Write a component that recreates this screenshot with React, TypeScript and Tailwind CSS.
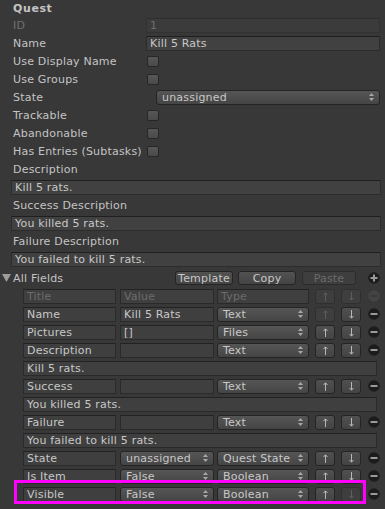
import React from "react";

const font = { fontFamily: '"DejaVu Sans", Verdana, sans-serif' };

function Field({ children, dim }: { children?: React.ReactNode; dim?: boolean }) {
  return (
    <div
      className={
        "h-[15px] flex items-center px-[3px] border border-[#2c2c2c] border-t-[#1f1f1f] leading-none truncate " +
        (dim ? "bg-[#3b3b3b] text-[#6f6f6f] border-[#323232] border-t-[#2e2e2e]" : "bg-[#414141] text-[#c8c8c8]")
      }
    >
      {children}
    </div>
  );
}

function Check() {
  return <div className="w-[12px] h-[11px] rounded-[2px] border border-[#262626] bg-gradient-to-b from-[#575757] to-[#4a4a4a]" />;
}

function Arrows() {
  return (
    <svg width="5" height="8" viewBox="0 0 5 8" className="shrink-0">
      <path d="M2.5 0 L5 3 L0 3 Z" fill="#a8a8a8" />
      <path d="M2.5 8 L5 5 L0 5 Z" fill="#a8a8a8" />
    </svg>
  );
}

function Drop({ children, className = "" }: { children: React.ReactNode; className?: string }) {
  return (
    <div
      className={
        "h-[15px] flex items-center justify-between pl-[5px] pr-[5px] rounded-[3px] border border-[#242424] bg-gradient-to-b from-[#565656] to-[#454545] text-[#c8c8c8] leading-none " +
        className
      }
    >
      <span>{children}</span>
      <Arrows />
    </div>
  );
}

function Label({ children, dim }: { children: React.ReactNode; dim?: boolean }) {
  return (
    <div className={"w-[146px] shrink-0 pl-[13px] leading-none whitespace-nowrap " + (dim ? "text-[#707070]" : "text-[#c4c4c4]")}>
      {children}
    </div>
  );
}

function Row({ children }: { children: React.ReactNode }) {
  return <div className="h-[18px] flex items-center">{children}</div>;
}

function Btn({ children, disabled, className = "" }: { children: React.ReactNode; disabled?: boolean; className?: string }) {
  return (
    <div
      className={
        "h-[14px] shrink-0 flex items-center justify-center rounded-[3px] border leading-none " +
        (disabled
          ? "border-[#2c2c2c] bg-[#3e3e3e] text-[#6a6a6a]"
          : "border-[#242424] bg-gradient-to-b from-[#525252] to-[#444444] text-[#c8c8c8]") +
        " " +
        className
      }
    >
      {children}
    </div>
  );
}

function ArrowBtn({ up, disabled }: { up?: boolean; disabled?: boolean }) {
  const c = disabled ? "#5e5e5e" : "#b8b8b8";
  return (
    <div
      className={
        "w-[20px] h-[15px] flex items-center justify-center rounded-[3px] border " +
        (disabled ? "border-[#2f2f2f] bg-[#3e3e3e]" : "border-[#242424] bg-gradient-to-b from-[#505050] to-[#444444]")
      }
    >
      <svg width="5" height="9" viewBox="0 0 5 9">
        {up ? (
          <>
            <path d="M2.5 1 L2.5 9" stroke={c} strokeWidth="1" />
            <path d="M0.5 3 L2.5 0.8 L4.5 3" stroke={c} strokeWidth="1" fill="none" />
          </>
        ) : (
          <>
            <path d="M2.5 0 L2.5 8" stroke={c} strokeWidth="1" />
            <path d="M0.5 6 L2.5 8.2 L4.5 6" stroke={c} strokeWidth="1" fill="none" />
          </>
        )}
      </svg>
    </div>
  );
}

function Circle({ plus, disabled }: { plus?: boolean; disabled?: boolean }) {
  const bg = disabled ? "#444444" : "#1c1c1c";
  const fg = disabled ? "#3a3a3a" : "#9a9a9a";
  return (
    <svg width="12" height="12" viewBox="0 0 12 12" className="shrink-0">
      <circle cx="6" cy="6" r="5.8" fill={bg} />
      <rect x="2.5" y="5" width="7" height="2" fill={fg} />
      {plus && <rect x="5" y="2.5" width="2" height="7" fill={fg} />}
    </svg>
  );
}

function Cell({ children, dim }: { children?: React.ReactNode; dim?: boolean }) {
  return (
    <div
      className={
        "h-[15px] flex items-center px-[3px] border border-[#2a2a2a] border-t-[#222222] bg-[#3f3f3f] leading-none whitespace-nowrap overflow-hidden " +
        (dim ? "text-[#6c6c6c]" : "text-[#c8c8c8]")
      }
    >
      {children}
    </div>
  );
}

type TRow = {
  title: string;
  value?: string;
  valueDrop?: string;
  type: string;
  upDis?: boolean;
  downDis?: boolean;
};

function TableRow({ r }: { r: TRow }) {
  return (
    <div className="h-[18px] flex items-center pl-[23px]">
      <div className="w-[93px]">
        <Cell>{r.title}</Cell>
      </div>
      <div className="w-[94px] ml-[4px]">
        {r.valueDrop ? <Drop>{r.valueDrop}</Drop> : <Cell>{r.value}</Cell>}
      </div>
      <div className="w-[92px] ml-[3px]">
        <Drop>{r.type}</Drop>
      </div>
      <div className="ml-[6px]">
        <ArrowBtn up disabled={r.upDis} />
      </div>
      <div className="ml-[6px]">
        <ArrowBtn disabled={r.downDis} />
      </div>
      <div className="ml-[7px]">
        <Circle />
      </div>
    </div>
  );
}

function WideText({ children }: { children: React.ReactNode }) {
  return (
    <div className="h-[18px] flex items-center pl-[23px] pr-[8px]">
      <div className="flex-1">
        <Cell>{children}</Cell>
      </div>
    </div>
  );
}

function FullField({ children }: { children: React.ReactNode }) {
  return (
    <div className="h-[18px] flex items-center pl-[11px] pr-[4px]">
      <div className="flex-1">
        <Field>{children}</Field>
      </div>
    </div>
  );
}

export default function App() {
  return (
    <div className="w-[385px] h-[509px] bg-[#383838] text-[11px] tracking-[0.2px] overflow-hidden relative" style={font}>
      <div className="h-[16px] flex items-center pl-[13px] font-bold text-[#c4c4c4] leading-none tracking-[0.6px]">Quest</div>
      <Row>
        <Label dim>ID</Label>
        <div className="flex-1 mr-[5px]">
          <Field dim>1</Field>
        </div>
      </Row>
      <Row>
        <Label>Name</Label>
        <div className="flex-1 mr-[5px]">
          <Field>Kill 5 Rats</Field>
        </div>
      </Row>
      <Row>
        <Label>Use Display Name</Label>
        <div className="ml-[1px]">
          <Check />
        </div>
      </Row>
      <Row>
        <Label>Use Groups</Label>
        <div className="ml-[1px]">
          <Check />
        </div>
      </Row>
      <Row>
        <Label>State</Label>
        <div className="flex-1 ml-[10px] mr-[5px]">
          <Drop>unassigned</Drop>
        </div>
      </Row>
      <Row>
        <Label>Trackable</Label>
        <div className="ml-[1px]">
          <Check />
        </div>
      </Row>
      <Row>
        <Label>Abandonable</Label>
        <div className="ml-[1px]">
          <Check />
        </div>
      </Row>
      <Row>
        <Label>Has Entries (Subtasks)</Label>
        <div className="ml-[1px]">
          <Check />
        </div>
      </Row>
      <Row>
        <Label>Description</Label>
      </Row>
      <FullField>Kill 5 rats.</FullField>
      <Row>
        <Label>Success Description</Label>
      </Row>
      <FullField>You killed 5 rats.</FullField>
      <Row>
        <Label>Failure Description</Label>
      </Row>
      <FullField>You failed to kill 5 rats.</FullField>

      <div className="h-[18px] flex items-center mt-[1px]">
        <div className="w-[175px] shrink-0 flex items-center">
          <svg width="9" height="8" viewBox="0 0 9 8" className="ml-[2px]">
            <path d="M0 0 L9 0 L4.5 8 Z" fill="#9c9c9c" />
          </svg>
          <span className="ml-[2px] text-[#c4c4c4] leading-none">All Fields</span>
        </div>
        <Btn className="w-[58px]">Template</Btn>
        <Btn className="w-[58px] ml-[5px]">Copy</Btn>
        <Btn disabled className="w-[54px] ml-[6px]">
          Paste
        </Btn>
        <div className="ml-[12px]">
          <Circle plus />
        </div>
      </div>

      <div className="h-[18px] flex items-center pl-[23px]">
        <div className="w-[93px]">
          <Cell dim>Title</Cell>
        </div>
        <div className="w-[94px] ml-[4px]">
          <Cell dim>Value</Cell>
        </div>
        <div className="w-[92px] ml-[3px]">
          <Cell dim>Type</Cell>
        </div>
        <div className="ml-[6px]">
          <ArrowBtn up disabled />
        </div>
        <div className="ml-[6px]">
          <ArrowBtn disabled />
        </div>
        <div className="ml-[7px]">
          <Circle disabled />
        </div>
      </div>
      <TableRow r={{ title: "Name", value: "Kill 5 Rats", type: "Text", upDis: true }} />
      <TableRow r={{ title: "Pictures", value: "[]", type: "Files" }} />
      <TableRow r={{ title: "Description", value: "", type: "Text" }} />
      <WideText>Kill 5 rats.</WideText>
      <TableRow r={{ title: "Success", value: "", type: "Text" }} />
      <WideText>You killed 5 rats.</WideText>
      <TableRow r={{ title: "Failure", value: "", type: "Text" }} />
      <WideText>You failed to kill 5 rats.</WideText>
      <TableRow r={{ title: "State", valueDrop: "unassigned", type: "Quest State" }} />
      <TableRow r={{ title: "Is Item", valueDrop: "False", type: "Boolean" }} />
      <div className="relative">
        <TableRow r={{ title: "Visible", valueDrop: "False", type: "Boolean", downDis: true }} />
        <div className="absolute left-[14px] top-[-5px] w-[352px] h-[24px] border-[3px] border-[#ff00ff] pointer-events-none" />
      </div>
    </div>
  );
}
